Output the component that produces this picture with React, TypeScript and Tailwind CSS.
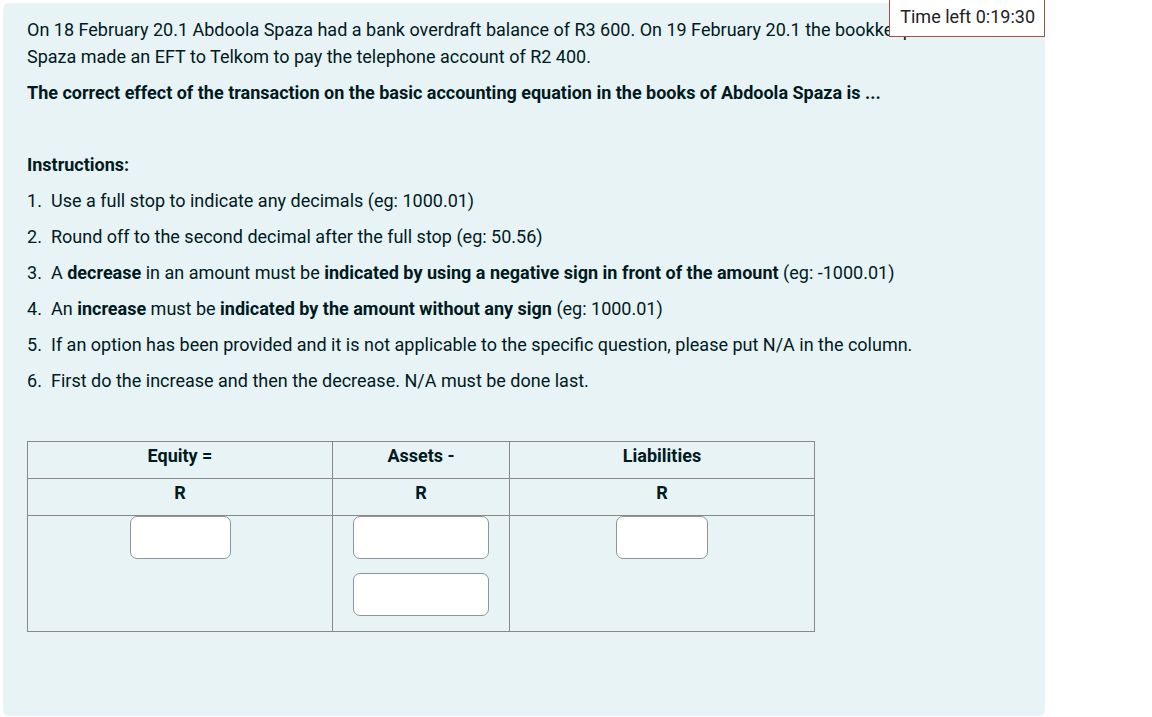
import React from "react";

const font = { fontFamily: "Roboto, 'Noto Sans', Arial, sans-serif" };

function Num({ n, children }: { n: number; children: React.ReactNode }) {
  return (
    <p className="flex mb-[9px]">
      <span className="w-[24px] shrink-0">{n}.</span>
      <span>{children}</span>
    </p>
  );
}

function Input({ w }: { w: string }) {
  return (
    <div className={`${w} h-[43px] bg-white border border-[#8f959e] rounded-[7px]`} />
  );
}

export default function App() {
  return (
    <div className="relative w-[1152px] h-[717px] bg-white overflow-hidden" style={font}>
      <div className="absolute top-[-7px] right-[107px] bg-white border border-[#a0524a] pl-[10px] pr-[9px] pt-[9px] pb-[6px] text-[18px] leading-[27px] text-[#1d2125] z-10">
        Time left 0:19:30
      </div>
      <div className="ml-[3px] mt-[3px] w-[1042px] h-[713px] bg-[#e7f3f5] rounded-[6px] pl-[24px] pr-[24px] pt-[13px] text-[#001a1e] text-[18px] leading-[27px]">
        <p className="mb-[9px]">
          On 18 February 20.1 Abdoola Spaza had a bank overdraft balance of R3 600. On 19 February 20.1 the bookkeeper of Abdoola
          Spaza made an EFT to Telkom to pay the telephone account of R2 400.
        </p>
        <p className="mb-[9px] font-bold">
          The correct effect of the transaction on the basic accounting equation in the books of Abdoola Spaza is ...
        </p>
        <p className="mb-[9px] h-[27px]"></p>
        <p className="mb-[9px] font-bold">Instructions:</p>
        <Num n={1}>Use a full stop to indicate any decimals (eg: 1000.01)</Num>
        <Num n={2}>Round off to the second decimal after the full stop (eg: 50.56)</Num>
        <Num n={3}>
          A <b>decrease</b> in an amount must be <b>indicated by using a negative sign in front of the amount</b> (eg: -1000.01)
        </Num>
        <Num n={4}>
          An <b>increase</b> must be <b>indicated by the amount without any sign</b> (eg: 1000.01)
        </Num>
        <Num n={5}>
          If an option has been provided and it is not applicable to the specific question, please put N/A in the column.
        </Num>
        <Num n={6}>First do the increase and then the decrease. N/A must be done last.</Num>
        <div className="mt-[47px] w-[788px] border border-[#888888] text-[18px] font-bold">
          <div className="grid grid-cols-[305px_177px_1fr] border-b border-[#888888] h-[37px]">
            <div className="border-r border-[#888888] flex items-start justify-center">Equity =</div>
            <div className="border-r border-[#888888] flex items-start justify-center">Assets -</div>
            <div className="flex items-start justify-center">Liabilities</div>
          </div>
          <div className="grid grid-cols-[305px_177px_1fr] border-b border-[#888888] h-[37px]">
            <div className="border-r border-[#888888] flex items-start justify-center">R</div>
            <div className="border-r border-[#888888] flex items-start justify-center">R</div>
            <div className="flex items-start justify-center">R</div>
          </div>
          <div className="grid grid-cols-[305px_177px_1fr] h-[115px]">
            <div className="border-r border-[#888888] flex justify-center">
              <Input w="w-[101px]" />
            </div>
            <div className="border-r border-[#888888] flex flex-col items-center gap-[14px]">
              <Input w="w-[136px]" />
              <Input w="w-[136px]" />
            </div>
            <div className="flex justify-center">
              <Input w="w-[92px]" />
            </div>
          </div>
        </div>
      </div>
    </div>
  );
}
